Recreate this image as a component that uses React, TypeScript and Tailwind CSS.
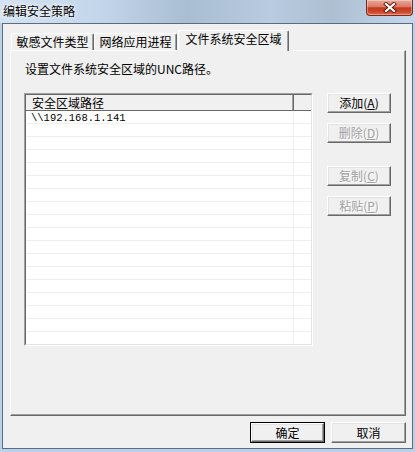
import React from "react";

type BtnProps = {
  label: string;
  hot?: string;
  disabled?: boolean;
  wide?: boolean;
  isDefault?: boolean;
};

function DlgButton({ label, hot, disabled, wide, isDefault }: BtnProps) {
  const face = (
    <div
      className={`flex items-center justify-center bg-[#f0f0f0] border border-t-white border-l-white border-r-[#696969] border-b-[#696969] shadow-[inset_-1px_-1px_0_#a0a0a0,inset_1px_1px_0_#e3e3e3] text-[12px] leading-[12px] ${
        disabled ? "text-[#a0a0a0] [text-shadow:1px_1px_0_#ffffff]" : "text-black"
      } ${wide ? (isDefault ? "w-[73px] h-[19px]" : "w-[75px] h-[21px]") : "w-[64px] h-[20px]"}`}
    >
      <span>
        {label}
        {hot && (
          <>
            (<span className="underline">{hot}</span>)
          </>
        )}
      </span>
    </div>
  );
  if (isDefault) return <div className="border border-black">{face}</div>;
  return face;
}

function Tab({ label, selected, w }: { label: string; selected?: boolean; w: string }) {
  if (selected) {
    return (
      <div
        className={`relative z-10 -mb-px ml-[1px] h-[21px] ${w} bg-[#f0f0f0] border-t border-l border-r border-t-white border-l-white border-r-[#696969] shadow-[inset_-1px_0_0_#a0a0a0] rounded-tl-[2px] rounded-tr-[2px] flex justify-center pt-[1px] text-[12px] leading-[14px] text-black`}
      >
        {label}
      </div>
    );
  }
  return (
    <div
      className={`h-[17px] ${w} bg-[#f0f0f0] border-t border-l border-r border-t-white border-l-white border-r-[#696969] shadow-[inset_-1px_0_0_#a0a0a0] rounded-tl-[2px] rounded-tr-[2px] flex justify-center pt-[1px] text-[12px] leading-[13px] text-black`}
    >
      {label}
    </div>
  );
}

const rows = Array.from({ length: 18 }, (_, i) => (i === 0 ? "\\\\192.168.1.141" : ""));

export default function App() {
  return (
    <div className="w-[415px] h-[452px] overflow-hidden bg-[#b9d1ea] font-['Noto_Sans_CJK_SC','Liberation_Sans',sans-serif] select-none">
      {/* title bar */}
      <div className="h-[23px] flex items-start justify-between pl-[3px] pr-[2px] bg-[linear-gradient(90deg,#d3e2f2_0%,#c2d5ea_25%,#a9bdd3_45%,#b8cbe0_65%,#aebfd2_80%,#c4d7ec_100%)]">
        <div className="pt-[4px] text-[12px] leading-[14px] text-black [text-shadow:0_0_6px_#ffffff,0_0_3px_#ffffff]">
          编辑安全策略
        </div>
        <div className="w-[47px] h-[16px] rounded-b-[4px] border border-t-0 border-[#7c2a1a] bg-[linear-gradient(180deg,#e9a898_0%,#db7a64_45%,#c4391f_52%,#c9442a_75%,#e06a4c_100%)] flex items-center justify-center shadow-[inset_0_0_0_1px_rgba(255,255,255,0.35)]">
          <svg width="14" height="11" viewBox="0 0 14 11">
            <path d="M3 2 L11 9 M11 2 L3 9" stroke="#5a1a10" strokeWidth="4" strokeLinecap="square" />
            <path d="M3 2 L11 9 M11 2 L3 9" stroke="#ffffff" strokeWidth="2.2" strokeLinecap="square" />
          </svg>
        </div>
      </div>

      {/* client area */}
      <div className="ml-[2px] w-[411px] h-[426px] border border-[#5d6b7c] bg-[#f0f0f0] flex flex-col">
        <div className="pt-[6px] pl-[7px]">
          <div className="flex items-end h-[20px] pl-[1px]">
            <Tab label="敏感文件类型" w="w-[83px]" />
            <Tab label="网络应用进程" w="w-[83px]" />
            <Tab label="文件系统安全区域" w="w-[111px]" selected />
          </div>

          <div className="w-[396px] h-[366px] border-t border-l border-r border-b border-t-white border-l-white border-r-[#696969] border-b-[#696969] shadow-[inset_-1px_-1px_0_#a0a0a0] pt-[12px] pl-[13px]">
            <div className="ml-[1px] mb-[18px] text-[12px] leading-[12px] text-black">
              设置文件系统安全区域的UNC路径。
            </div>

            <div className="flex items-start">
              {/* list view */}
              <div className="w-[289px] h-[253px] border border-t-[#a0a0a0] border-l-[#a0a0a0] border-r-white border-b-white">
                <div className="w-full h-full border border-t-[#696969] border-l-[#696969] border-r-[#e3e3e3] border-b-[#e3e3e3] bg-white overflow-hidden flex flex-col">
                  <div className="flex h-[16px] shrink-0 bg-[#f0f0f0] border-b border-[#696969]">
                    <div className="w-[268px] h-full border-r border-[#696969] shadow-[inset_-1px_0_0_#a0a0a0] pl-[6px] pt-[1px] text-[12px] leading-[13px] text-black">
                      安全区域路径
                    </div>
                    <div className="flex-1 h-full" />
                  </div>
                  <div className="flex flex-col">
                    {rows.map((r, i) => (
                      <div key={i} className="flex h-[13px] shrink-0 border-b border-[#efefef]">
                        <div className="w-[268px] h-full border-r border-[#efefef] pl-[5px] pt-[1px] font-['Liberation_Mono',monospace] text-[10.5px] leading-[12px] text-black">
                          {r}
                        </div>
                        <div className="flex-1" />
                      </div>
                    ))}
                  </div>
                </div>
              </div>

              {/* side buttons */}
              <div className="ml-[14px] flex flex-col">
                <DlgButton label="添加" hot="A" />
                <div className="mt-[10px]">
                  <DlgButton label="删除" hot="D" disabled />
                </div>
                <div className="mt-[23px]">
                  <DlgButton label="复制" hot="C" disabled />
                </div>
                <div className="mt-[10px]">
                  <DlgButton label="粘贴" hot="P" disabled />
                </div>
              </div>
            </div>
          </div>
        </div>

        {/* bottom buttons */}
        <div className="mt-[6px] pr-[6px] flex justify-end gap-[6px]">
          <DlgButton label="确定" wide isDefault />
          <DlgButton label="取消" wide />
        </div>
      </div>
    </div>
  );
}
